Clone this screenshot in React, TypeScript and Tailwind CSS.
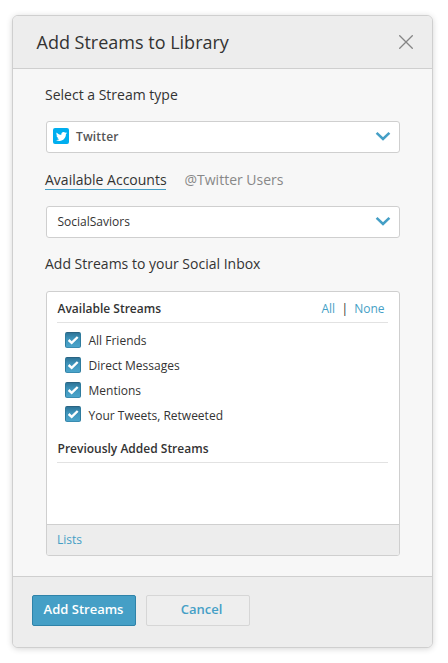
import React from 'react';

function Chevron() {
  return (
    <svg className="mb-[2px] block h-[10px] w-[16px]" viewBox="0 0 16 10" fill="none">
      <path d="M1.6 1.9 L8 8 L14.4 1.9" stroke="#459fc6" strokeWidth="2.6" />
    </svg>
  );
}

function TwitterLogo() {
  return (
    <span className="mb-[2px] flex size-4 items-center justify-center rounded-[2px] bg-[#00aeef]">
      <svg className="block size-[11px]" viewBox="0 0 24 24" fill="#fff">
        <path d="M23.95 4.57a10 10 0 0 1-2.82.77 4.96 4.96 0 0 0 2.16-2.72c-.95.55-2 .95-3.12 1.18a4.92 4.92 0 0 0-8.38 4.48C7.69 8.1 4.07 6.13 1.64 3.16a4.9 4.9 0 0 0 1.52 6.57 4.9 4.9 0 0 1-2.23-.61v.06a4.92 4.92 0 0 0 3.95 4.83 5 5 0 0 1-2.21.08 4.94 4.94 0 0 0 4.6 3.42A9.87 9.87 0 0 1 0 19.54a13.99 13.99 0 0 0 7.55 2.21c9.05 0 14-7.5 14-13.98 0-.21 0-.42-.02-.63a9.94 9.94 0 0 0 2.42-2.57z" />
      </svg>
    </span>
  );
}

function Check({ raised = false }: { raised?: boolean }) {
  return (
    <span
      className={`${raised ? 'mt-[3px]' : 'mt-1'} block size-4 shrink-0 rounded-[2px] border border-[#2f7b9d] border-t-[#2a6483] border-b-[#3a8cb1] bg-linear-to-b from-[#2f7598] via-[#3d93ba] via-40% to-[#4ba5cb]`}
    >
      <svg className="block size-[14px]" viewBox="0 0 14 14" fill="none">
        <path d="M2.6 7 L5.7 9.9 L11.7 4" stroke="#fff" strokeWidth="2.4" />
      </svg>
    </span>
  );
}

const streams = ['All Friends', 'Direct Messages', 'Mentions', 'Your Tweets, Retweeted'];

export default function App() {
  return (
    <div className="h-[663px] w-[448px] overflow-hidden bg-white pt-[15px] pl-3 font-['Open_Sans',sans-serif] text-[#333]">
      <div className="flex h-[633px] w-[421px] flex-col overflow-hidden rounded-[6px] border border-[#cfcfcf] bg-[#f7f7f7] shadow-[0_1px_6px_rgba(0,0,0,0.16)]">
        <header className="flex h-[53px] shrink-0 items-center justify-between border-b border-[#cfcfcf] bg-[#ededed] pr-[19px] pl-[23.5px]">
          <h1 className="text-[18px] leading-[24px] whitespace-nowrap">Add Streams to Library</h1>
          <svg className="block size-[14px]" viewBox="0 0 14 14" fill="none">
            <path d="M0.3 0.3 L13.7 13.7 M13.7 0.3 L0.3 13.7" stroke="#858585" strokeWidth="1.3" />
          </svg>
        </header>

        <main className="flex flex-1 flex-col pt-4 pr-8 pl-8">
          <h2 className="text-[14px] leading-5">Select a Stream type</h2>
          <div className="mt-4 ml-px flex h-8 w-[354px] items-center justify-between rounded-[3px] border border-[#cfcfcf] bg-white pr-2 pl-[6px]">
            <div className="flex items-center gap-[7px]">
              <TwitterLogo />
              <span className="text-[12px] leading-[18px] font-semibold tracking-[0.15px] text-[#555]">Twitter</span>
            </div>
            <Chevron />
          </div>

          <div className="mt-[17px] flex gap-[18px] text-[14px] leading-5 whitespace-nowrap">
            <span className="h-5 w-[121px] border-b border-[#459fc6]">Available Accounts</span>
            <span className="ml-[0.5px] h-5 text-[#888]">@Twitter Users</span>
          </div>
          <div className="mt-4 ml-px flex h-8 w-[354px] items-center justify-between rounded-[3px] border border-[#cfcfcf] bg-white pr-2 pl-[10.5px]">
            <span className="text-[12px] leading-[18px]">SocialSaviors</span>
            <Chevron />
          </div>

          <h2 className="mt-4 text-[14px] leading-5">Add Streams to your Social Inbox</h2>
          <section className="mt-[17px] ml-px flex h-[265px] w-[354px] flex-col overflow-hidden rounded-[3px] border border-[#cfcfcf] bg-white text-[12px]">
            <div className="mr-[11px] ml-[10px] flex h-[31px] justify-between border-b border-[#e2e2e2] pt-[7px] pr-[3.5px] leading-5">
              <h3 className="pl-[0.5px] font-semibold">Available Streams</h3>
              <div className="flex text-[#459fc6]">
                <span>All</span>
                <span className="mr-[6px] ml-[6.5px] text-[#333]">|</span>
                <span>None</span>
              </div>
            </div>
            <ul className="mt-[5px] pl-[18px]">
              {streams.map((name, i) => (
                <li key={name} className="flex h-[25px] gap-[7.5px] leading-[25px]">
                  <Check raised={i === 3} />
                  <span>{name}</span>
                </li>
              ))}
            </ul>
            <h3 className="mr-[11px] ml-[10px] mt-[10px] h-[25px] border-b border-[#e2e2e2] pl-[0.5px] leading-[22px] font-semibold">
              Previously Added Streams
            </h3>
            <div className="mt-auto h-[31px] border-t border-[#cfcfcf] bg-[#ededed] pl-[10px] leading-[30px] text-[#459fc6]">
              Lists
            </div>
          </section>
        </main>

        <footer className="flex h-[71px] shrink-0 gap-[10px] border-t border-[#cfcfcf] bg-[#ededed] pt-[18px] pl-[19px] text-[13px] font-semibold">
          <button className="h-[31px] w-[104px] rounded-[2px] border border-[#2f83a9] bg-[#459fc6] pr-px pb-[2px] whitespace-nowrap text-white">
            Add Streams
          </button>
          <button className="h-[31px] w-[104px] rounded-[2px] border border-[#d6d6d6] bg-[#eeeeee] pb-[2px] pl-[7px] text-[#459fc6]">
            Cancel
          </button>
        </footer>
      </div>
    </div>
  );
}
